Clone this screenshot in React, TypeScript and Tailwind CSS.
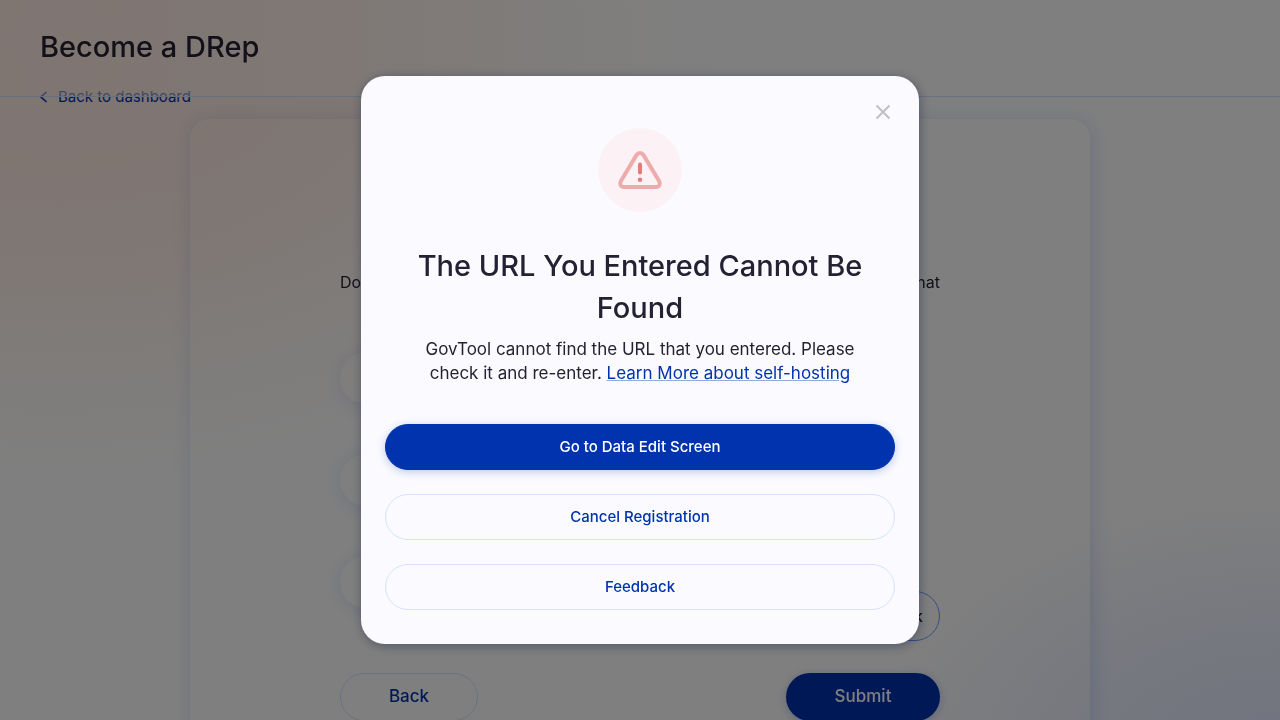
import { ReactNode } from "react";

const fields = ["Link 1", "Link 2", "Link 3"];

function DialogButton({ children, primary = false }: { children: ReactNode; primary?: boolean }) {
  const tone = primary
    ? "border-[#0033ad] bg-[#0033ad] text-white shadow-[0_2px_10px_0_rgba(0,51,173,0.25)]"
    : "border-[#d6e2ff] text-[#0033ad]";
  return (
    <button type="button" className={`h-[46px] w-full rounded-full border text-[15px] font-medium ${tone}`}>
      {children}
    </button>
  );
}

function WarningIcon() {
  return (
    <svg viewBox="0 0 84 84" className="mx-auto size-[84px]" fill="none" aria-hidden="true">
      <circle cx="42" cy="42" r="42" fill="#fcf2f5" />
      <path
        d="M38.6 26.9 22.8 53.2c-1.5 2.6 0 5.8 3.1 5.8h32.2c3.1 0 4.6-3.2 3.1-5.8L45.4 26.9c-1.6-2.6-5.2-2.6-6.8 0Z"
        stroke="#edacac"
        strokeWidth="4"
        strokeLinejoin="round"
      />
      <path d="M42 36.5v8" stroke="#e67b7b" strokeWidth="4" strokeLinecap="round" />
      <circle cx="42" cy="51.7" r="2.2" fill="#e67b7b" />
    </svg>
  );
}

function RegistrationPage() {
  return (
    <div className="flex min-h-screen flex-col bg-white bg-[radial-gradient(ellipse_680px_440px_at_60px_40px,#ffe9e1_0%,#ffeee7_45%,#fff9f5_75%,#ffffff00_100%),radial-gradient(ellipse_420px_280px_at_100%_100%,#e0e7ff_0%,#edf1ff_50%,#ffffff00_100%)] pt-[86px]">
      <header className="fixed inset-x-0 top-0 flex h-[97px] items-center border-b border-[#d0defc] bg-gradient-to-r from-[#ffebe3]/50 via-white/50 to-white/50 px-10 pb-0.5">
        <h1 className="text-[29px] font-medium">Become a DRep</h1>
      </header>
      <a href="#dashboard" className="flex h-[22px] items-center gap-2.5 self-start px-10 text-[15px] text-[#0033ad]">
        <svg viewBox="0 0 8 12" className="h-3 w-2" fill="none" stroke="currentColor" strokeWidth="1.6">
          <path d="M6.5 1 1 6l5.5 5" />
        </svg>
        Back to dashboard
      </a>
      <main className="relative mx-auto mt-[11px] w-full max-w-[900px] flex-1 rounded-t-[20px] px-[150px] pt-[151px] shadow-[2px_2px_20px_0_rgba(47,98,220,0.2)]">
        <p className="[text-align-last:justify]">Do you want to add links to your profile or to any other page that</p>
        <div className="mt-[58px] flex flex-col gap-[50px]">
          {fields.map((name) => (
            <input
              key={name}
              aria-label={name}
              className="h-[52px] w-[520px] rounded-full px-6 shadow-[2px_2px_20px_0_rgba(47,98,220,0.2)]"
            />
          ))}
        </div>
        <button
          type="button"
          className="absolute right-[150px] top-[472px] h-[50px] rounded-full border border-[#6f9aff] px-4 font-medium"
        >
          Feedback
        </button>
        <div className="mt-[65px] flex justify-between pb-12 font-medium">
          <button type="button" className="h-12 w-[138px] rounded-full border border-[#d6e2ff] text-[17px] text-[#0033ad]">
            Back
          </button>
          <button
            type="button"
            className="h-12 w-[154px] rounded-full bg-[#0033ad] text-[17px] text-white shadow-[0_2px_10px_0_rgba(0,51,173,0.25)]"
          >
            Submit
          </button>
        </div>
      </main>
    </div>
  );
}

export default function App() {
  return (
    <div className="h-screen overflow-hidden font-['Inter',sans-serif] text-[#242232]">
      <RegistrationPage />
      <div className="fixed inset-0 flex items-center justify-center bg-black/50">
        <section
          role="dialog"
          aria-modal="true"
          aria-labelledby="dialog-title"
          className="relative w-full max-w-[558px] rounded-3xl bg-[#fbfbff] px-6 pb-[34px] pt-[52px] shadow-[1px_2px_11px_0_rgba(0,18,61,0.37)]"
        >
          <button type="button" aria-label="Close" className="absolute right-6 top-6 flex size-6 items-center justify-center text-[#c0c0c0]">
            <svg viewBox="0 0 16 16" className="size-4" fill="none" stroke="currentColor" strokeWidth="2">
              <path d="m1.5 1.5 13 13m0-13-13 13" />
            </svg>
          </button>
          <WarningIcon />
          <div className="px-6 text-center">
            <h2 id="dialog-title" className="mt-[33px] text-[29px] font-medium leading-[42px]">
              The URL You Entered Cannot Be Found
            </h2>
            <p className="mt-2 text-[17px] leading-6">
              GovTool cannot find the URL that you entered. Please check it and re-enter.{" "}
              <a href="#self-hosting" className="text-[#0033ad] underline decoration-[#0033ad]/40">
                Learn More about self-hosting
              </a>
            </p>
          </div>
          <div className="mt-[39px] flex flex-col gap-6">
            <DialogButton primary>Go to Data Edit Screen</DialogButton>
            <DialogButton>Cancel Registration</DialogButton>
            <DialogButton>Feedback</DialogButton>
          </div>
        </section>
      </div>
    </div>
  );
}
